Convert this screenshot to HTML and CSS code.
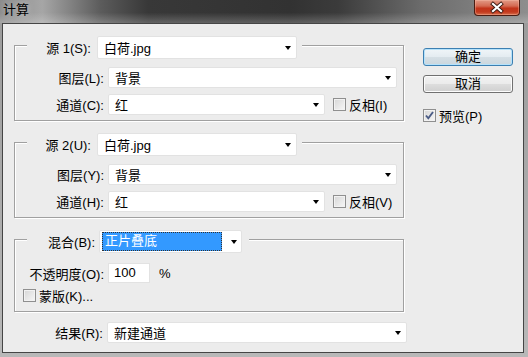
FILE: index.html
```html
<!DOCTYPE html>
<html lang="zh">
<head>
    <meta charset="UTF-8">
    <title>计算</title>
    <link rel="stylesheet" href="styles.css">
</head>
<body>
<div class="window">
    <div class="titlebar">
        <span class="title">计算</span>
        <span class="close">
            <svg width="44" height="14" viewBox="0 0 44 14">
                <path d="M18 3 L26 10 M26 3 L18 10" stroke="#3b1a12" stroke-width="4" stroke-linecap="square"/>
                <path d="M18 3 L26 10 M26 3 L18 10" stroke="#fff" stroke-width="2.2" stroke-linecap="square"/>
            </svg>
        </span>
    </div>
    <div class="client">
        <div class="main">
            <!-- 源 1 -->
            <div class="group">
                <div class="legend">
                    <span class="legend-label">源 1(S):</span>
                    <div class="combo src"><span>白荷.jpg</span><i class="arrow"></i></div>
                </div>
                <div class="row first">
                    <span class="label">图层(L):</span>
                    <div class="combo wide"><span>背景</span><i class="arrow"></i></div>
                </div>
                <div class="row">
                    <span class="label">通道(C):</span>
                    <div class="combo mid"><span>红</span><i class="arrow"></i></div>
                    <label class="check"><span class="box"></span>反相(I)</label>
                </div>
            </div>
            <!-- 源 2 -->
            <div class="group">
                <div class="legend">
                    <span class="legend-label">源 2(U):</span>
                    <div class="combo src"><span>白荷.jpg</span><i class="arrow"></i></div>
                </div>
                <div class="row first">
                    <span class="label">图层(Y):</span>
                    <div class="combo wide"><span>背景</span><i class="arrow"></i></div>
                </div>
                <div class="row">
                    <span class="label">通道(H):</span>
                    <div class="combo mid"><span>红</span><i class="arrow"></i></div>
                    <label class="check"><span class="box"></span>反相(V)</label>
                </div>
            </div>
            <!-- 混合 -->
            <div class="group blend">
                <div class="legend mix-legend">
                    <span class="legend-label">混合(B):</span>
                    <div class="combo mix"><span class="selected">正片叠底</span><i class="arrow"></i></div>
                </div>
                <div class="row opacity">
                    <span class="label">不透明度(O):</span>
                    <div class="field">100</div>
                    <span class="unit">%</span>
                </div>
                <div class="row mask">
                    <label class="check"><span class="box"></span>蒙版(K)...</label>
                </div>
            </div>
            <div class="row result">
                <span class="label">结果(R):</span>
                <div class="combo long"><span>新建通道</span><i class="arrow"></i></div>
            </div>
        </div>
        <div class="side">
            <button class="btn default">确定</button>
            <button class="btn">取消</button>
            <label class="check preview">
                <span class="box">
                    <svg width="11" height="11" viewBox="0 0 11 11">
                        <path d="M2 5.5 L4.3 8.3 L9 2" fill="none" stroke="#4b5c86" stroke-width="1.9"/>
                    </svg>
                </span>预览(P)
            </label>
        </div>
    </div>
</div>
</body>
</html>
```

FILE: styles.css
```css
* {
    box-sizing: border-box;
}
body {
    margin: 0;
    font-family: "Liberation Sans", "Noto Sans CJK SC", sans-serif;
    font-size: 13px;
    color: #000;
    background: #a8a8a8;
}
.window {
    width: 528px;
    height: 357px;
    display: flex;
    flex-direction: column;
    background: linear-gradient(to bottom, #9a9a9a, #b8b8b8);
}
.titlebar {
    height: 23px;
    flex-shrink: 0;
    display: flex;
    justify-content: space-between;
    align-items: flex-start;
    padding: 0 8px 0 3px;
    background:
        linear-gradient(to bottom, rgba(255, 255, 255, 0) 55%, rgba(255, 255, 255, 0.22) 100%),
        linear-gradient(to right, #8c8c8c 0%, #a6a6a6 8%, #5c5c5c 19%, #383838 28%, #323232 55%, #3b3b3b 64%, #6c6c6c 80%, #8e8e8e 100%);
}
.title {
    margin-top: 2px;
    line-height: 16px;
    text-shadow: 0 0 6px rgba(255, 255, 255, 0.5);
}
.close {
    width: 46px;
    height: 16px;
    border: 1px solid #4a1c12;
    border-top: none;
    border-radius: 0 0 4px 4px;
    background: linear-gradient(to bottom, #e29a86 0%, #d46a52 40%, #c2341a 55%, #c33a1e 80%, #d8714f 100%);
    box-shadow: inset 0 0 0 1px rgba(255, 200, 180, 0.35);
    display: flex;
    align-items: center;
    justify-content: center;
}
.close svg {
    display: block;
}
.client {
    flex: 1;
    margin: 0 4px 4px 2px;
    border: 1px solid #454545;
    background: #ececec;
    display: flex;
    align-items: flex-start;
    padding: 21px 0 0 11px;
}
.main {
    width: 394px;
    flex-shrink: 0;
}
.group {
    width: 390px;
    border: 1px solid #a0a0a0;
    box-shadow: inset 1px 1px 0 #fff, 1px 1px 0 #fff;
    padding-bottom: 5px;
}
.group + .group {
    margin-top: 21px;
}
.group.blend {
    padding-bottom: 8px;
}
.legend {
    display: flex;
    align-items: center;
    width: fit-content;
    height: 23px;
    margin: -10px 0 0 12px;
    padding-right: 5px;
    background: #ececec;
}
.legend-label {
    width: 70px;
    padding-right: 6px;
    text-align: right;
    white-space: nowrap;
}
.mix-legend {
    padding-right: 7px;
}
.mix-legend .legend-label {
    width: 72px;
    padding-right: 4px;
}
.row {
    display: flex;
    align-items: center;
    height: 21px;
    margin-top: 6px;
}
.row.first {
    margin-top: 8px;
}
.label {
    width: 93px;
    padding-right: 4px;
    text-align: right;
    white-space: nowrap;
}
.combo {
    height: 21px;
    flex-shrink: 0;
    display: flex;
    align-items: center;
    justify-content: space-between;
    padding: 0 5px 0 6px;
    background: #fff;
    border: 1px solid #e2e2e2;
    border-radius: 2px;
}
.combo.src {
    width: 200px;
    height: 23px;
}
.combo.wide {
    width: 289px;
}
.combo.mid {
    width: 217px;
}
.combo.long {
    width: 300px;
}
.combo.mix {
    width: 143px;
    height: 23px;
    padding: 1px 4px 1px 2px;
}
.selected {
    width: 120px;
    height: 19px;
    line-height: 18px;
    padding-left: 3px;
    color: #fff;
    background: #3399ff;
    outline: 1px dotted #333;
    outline-offset: -1px;
}
.arrow {
    width: 1px;
    height: 0;
    border-left: 3px solid transparent;
    border-right: 3px solid transparent;
    border-top: 4px solid #000;
}
.check {
    display: flex;
    align-items: center;
    gap: 3px;
    white-space: nowrap;
}
.row .check {
    margin-left: 8px;
}
.box {
    width: 13px;
    height: 13px;
    flex-shrink: 0;
    border: 1px solid #8f8f8f;
    background: linear-gradient(135deg, #d6d6d6, #f7f7f7);
    box-shadow: inset 0 0 0 1px #f2f2f2;
    display: flex;
    align-items: center;
    justify-content: center;
}
.box svg {
    display: block;
}
.row.opacity {
    height: 20px;
    margin-top: 10px;
}
.field {
    width: 42px;
    height: 20px;
    line-height: 18px;
    padding-left: 5px;
    background: #fff;
    border: 1px solid #e2e2e2;
}
.unit {
    margin-left: 9px;
}
.row.mask {
    height: 16px;
    margin-top: 4px;
}
.row.result {
    margin-top: 10px;
}
.side {
    width: 90px;
    margin: 3px 0 0 15px;
    display: flex;
    flex-direction: column;
}
.btn {
    width: 90px;
    height: 18px;
    padding: 0;
    font: inherit;
    line-height: 14px;
    color: #000;
    border: 1px solid #707070;
    border-radius: 3px;
    background: linear-gradient(to bottom, #f2f2f2 0%, #ebebeb 48%, #dddddd 52%, #cfcfcf 100%);
    box-shadow: inset 0 0 0 1px #fcfcfc;
}
.btn + .btn {
    margin-top: 9px;
}
.btn.default {
    border-color: #3c7fb1;
    background: linear-gradient(to bottom, #f0f5f8 0%, #e4ecf1 48%, #d5dfe5 52%, #cbd6dd 100%);
    box-shadow: inset 0 0 0 1px #b5e2fb;
}
.check.preview {
    height: 15px;
    margin-top: 15px;
}
```
